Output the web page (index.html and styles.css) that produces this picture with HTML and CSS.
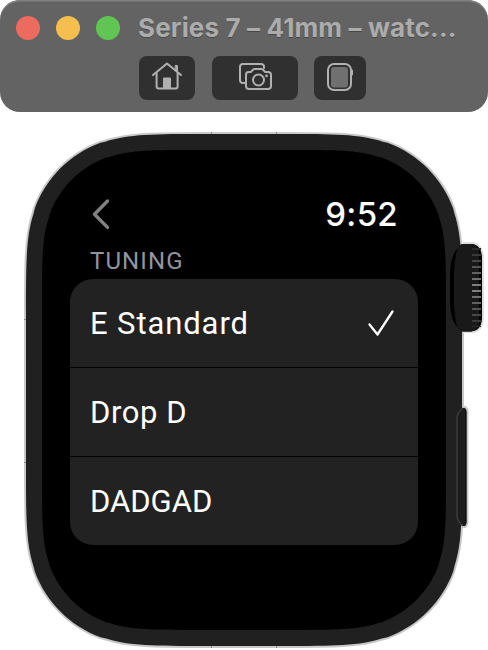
FILE: index.html
```
<!DOCTYPE html>
<html lang="en">
<head>
<meta charset="utf-8">
<title>Simulator</title>
<link rel="stylesheet" href="styles.css">
</head>
<body>
<header class="titlebar">
  <div class="title-row">
    <span class="light close"></span>
    <span class="light minimize"></span>
    <span class="light zoom"></span>
    <h1 class="title">Series 7 – 41mm – watc...</h1>
  </div>
  <div class="tools">
    <button class="tool home" aria-label="Home">
      <svg width="56" height="44" viewBox="0 0 56 44" fill="none" stroke="#b0b0b0" stroke-width="2" stroke-linecap="round" stroke-linejoin="round">
        <path d="M14 19 28 7.500 42 19"/>
        <path d="M17.600 17v13.500q0 2 2 2h17q2 0 2-2V17"/>
        <path d="M24.500 32v-10h7v10z" fill="#b0b0b0" stroke-width="1"/>
        <path d="M36.500 9.500h2v6l-2-2z" fill="#b0b0b0" stroke-width="1"/>
      </svg>
    </button>
    <button class="tool shots" aria-label="Screenshot">
      <svg width="86" height="44" viewBox="0 0 86 44" fill="none" stroke="#b0b0b0" stroke-width="2" stroke-linecap="round" stroke-linejoin="round">
        <path d="M33 27h-2q-3 0-3-3V11q0-3 3-3h18q3 0 3 3v1"/>
        <path d="M36.500 16h2.500q2-3 3.500-3h7q1.500 0 3.500 3H56q3 0 3 3V30q0 3-3 3H37q-3 0-3-3V19q0-3 2.500-3z"/>
        <circle cx="46.500" cy="24" r="5.500"/>
        <circle cx="54.500" cy="19.800" r="1.400" fill="#b0b0b0" stroke="none"/>
      </svg>
    </button>
    <button class="tool device" aria-label="Device">
      <svg width="52" height="44" viewBox="0 0 52 44">
        <rect x="14" y="8" width="23" height="26" rx="6" fill="none" stroke="#b0b0b0" stroke-width="2"/>
        <rect x="17" y="11" width="17" height="20.500" rx="3" fill="#707070"/>
        <rect x="37" y="13.500" width="2" height="6" rx="1" fill="#b0b0b0"/>
      </svg>
    </button>
  </div>
</header>

<main class="watch">
  <svg class="case" width="488" height="538" viewBox="0 112 488 538">
    <defs>
      <linearGradient id="ridges" gradientUnits="userSpaceOnUse" x1="0" y1="245" x2="0" y2="331">
        <stop offset="0" stop-color="#222"/>
        <stop offset=".5" stop-color="#858585"/>
        <stop offset="1" stop-color="#222"/>
      </linearGradient>
    </defs>
    <path transform="translate(26 134)" fill="#202020" stroke="#c9c8c9" stroke-width="4" paint-order="stroke" d="M0 180.400c0-52 0-77.900 7.700-101.300l1.100-4.600c11.200-30.500 35.200-54.500 65.700-65.700l4.600-1.100c23.400-7.700 49.300-7.700 101.300-7.700h75.200c52 0 77.900 0 101.300 7.700l4.600 1.100c30.500 11.200 54.500 35.200 65.700 65.700l1.100 4.600c7.700 23.400 7.700 49.300 7.700 101.300v151.200c0 52 0 77.900-7.700 101.300l-1.100 4.600c-11.200 30.500-35.200 54.500-65.700 65.700l-4.600 1.100c-23.400 7.700-49.300 7.700-101.300 7.700h-75.200c-52 0-77.900 0-101.300-7.700l-4.600-1.100c-30.500-11.200-54.500-35.200-65.700-65.700l-1.100-4.600c-7.700-23.400-7.700-49.300-7.700-101.300z"/>
    <path d="M211.500 132v2M276.500 132v2M211.500 646v2M276.500 646v2M24 319.500h2M24 462.500h2" stroke="#8a8a8a"/>
    <path transform="translate(42 150) scale(.8644)" d="M0 180.400c0-52 0-77.900 7.700-101.300l1.100-4.600c11.200-30.500 35.200-54.500 65.700-65.700l4.600-1.100c23.400-7.700 49.300-7.700 101.300-7.700h106.600c52 0 77.900 0 101.300 7.700l4.600 1.100c30.500 11.200 54.500 35.200 65.700 65.700l1.100 4.600c7.700 23.400 7.700 49.300 7.700 101.300v194.500c0 52 0 77.900-7.700 101.300l-1.100 4.600c-11.200 30.500-35.200 54.500-65.700 65.700l-4.600 1.100c-23.400 7.700-49.300 7.700-101.300 7.700h-106.600c-52 0-77.900 0-101.300-7.700l-4.600-1.100c-30.500-11.200-54.500-35.200-65.700-65.700l-1.100-4.600c-7.700-23.400-7.700-49.300-7.700-101.300z"/>
    <path d="M463 243h10q10 2 10 16v57q0 15-10 16h-10" fill="#1a1a1a" stroke="#dedede" stroke-width="2"/>
    <path d="M463 244h8q11 1 11 15v57q0 14-11 15.500h-8q-13-6-13-31v-25q0-25 13-31.500z" fill="#000"/>
    <path d="M463 244h8q6 1 8 7v74q-2 5.500-8 6.500h-8q-4 0-6-5q-3-12-3-26v-25q0-14 3-26q2-5.500 6-5.500z" fill="#191919"/>
    <path d="M476.500 248v79" stroke="url(#ridges)" stroke-width="9" stroke-dasharray="2 4"/>
    <path d="M463 407h2q2.500 1 2.500 5v109q0 5-2.500 6h-2" fill="#1c1c1c" stroke="#c9c8c9" stroke-width="2"/>
    <path d="M463 408h1.500q2 1 2 4v109q0 4-2 5h-1.500q-6-5-6-10v-98q0-5 6-10z" fill="#1c1c1c"/>
    <path d="M463 408q-6 5-6 10v98q0 5 6 10" fill="none" stroke="#3b3b3b" stroke-width="1.500"/>
    <path d="M465.500 410v114" stroke="#111"/>
  </svg>
  <section class="screen">
    <div class="status">
      <svg class="back" width="18" height="32" viewBox="0 0 18 32" fill="none" stroke="#828282" stroke-width="3.400" stroke-linecap="round" stroke-linejoin="round"><path d="M15.500 3 2.500 16.200 15.500 29.400"/></svg>
      <time class="time">9:52</time>
    </div>
    <h2 class="heading"><span>TUNING</span></h2>
    <ul class="list">
      <li class="row"><span class="standard">E Standard</span>
        <svg width="28" height="28" viewBox="0 0 28 28" fill="none" stroke="#fff" stroke-width="2.300" stroke-linecap="round" stroke-linejoin="round"><path d="M2.500 15.500 10.500 25.500 25.500 2.500"/></svg>
      </li>
      <li class="row"><span class="drop">Drop D</span></li>
      <li class="row"><span class="dadgad">DADGAD</span></li>
    </ul>
  </section>
</main>
</body>
</html>
```
FILE: styles.css
```
* { box-sizing: border-box; }
body {
  margin: 0;
  width: 488px;
  height: 650px;
  overflow: hidden;
  background: #fff;
  color: #fff;
  font-family: Inter, "Liberation Sans", sans-serif;
}
.titlebar {
  height: 112px;
  border-radius: 20px;
  background: #636363;
  box-shadow: inset 0 1.500px 0 #808080;
}
.title-row {
  display: flex;
  align-items: center;
  gap: 16px;
  height: 56px;
  padding-left: 16px;
}
.light { width: 24px; height: 24px; border-radius: 50%; }
.close { background: #ed6a5e; }
.minimize { background: #f5bf4f; }
.zoom { background: #61c554; }
.title {
  margin: 0 0 1px 2px;
  color: #acacac;
  font-size: 26px;
  font-weight: 700;
  line-height: 32px;
  letter-spacing: .13px;
  white-space: nowrap;
  text-shadow: 0 1px 0 #484848;
}
.tools { display: flex; padding-left: 139px; }
.tool {
  display: block;
  height: 44px;
  margin: 0;
  padding: 0;
  border: 0;
  border-radius: 8px;
  background: #303030;
}
.tool svg { display: block; }
.shots { margin: 0 16px 0 17px; }
.watch { position: relative; height: 538px; }
.case { position: absolute; inset: 0; }
.screen { position: relative; padding: 82px 70px 0; font-family: Roboto, Inter, sans-serif; }
.status {
  display: flex;
  align-items: center;
  justify-content: space-between;
  height: 40px;
  padding: 0 20px 0 22px;
}
.time { font-family: Inter, sans-serif; font-size: 33px; font-weight: 550; line-height: 40px; letter-spacing: .3px; }
.heading {
  margin: 0;
  height: 45px;
  padding: 12px 0 0 20px;
  color: #9195a0;
  font-size: 24px;
  font-weight: 400;
  line-height: 31px;
  letter-spacing: 1.100px;
}
.list {
  margin: 0;
  padding: 0;
  list-style: none;
  border-radius: 23px;
  background: #222;
}
.row {
  display: flex;
  align-items: center;
  justify-content: space-between;
  height: 89px;
  padding: 0 23px 0 20px;
  border-bottom: 1px solid #000;
  font-size: 31px;
  line-height: 40px;
}
.row span { padding-top: 1px; }
.standard { letter-spacing: .900px; }
.drop { letter-spacing: .600px; }
.dadgad { letter-spacing: 0; }
.row:last-child { height: 88px; border: 0; }
```
